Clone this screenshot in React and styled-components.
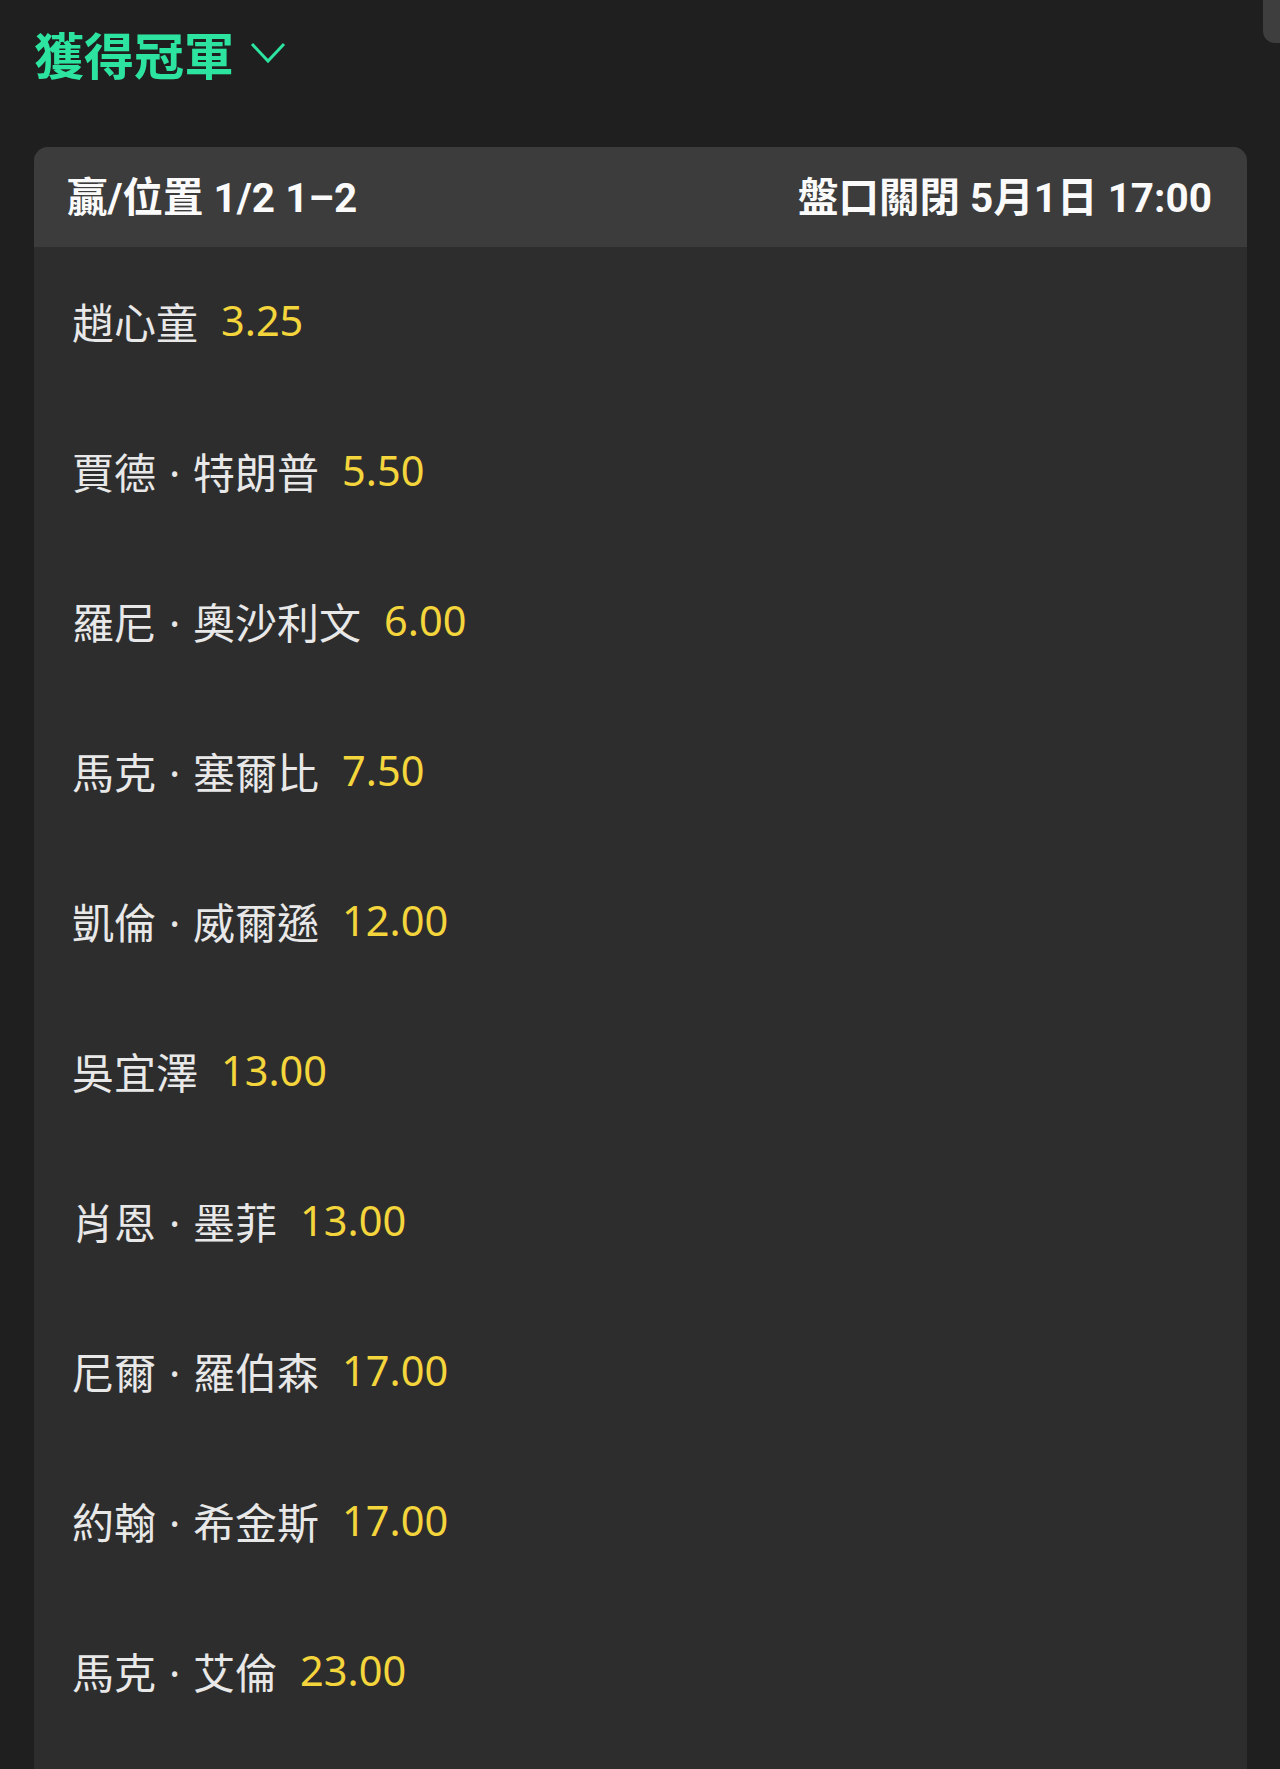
import React from 'react'
import styled, { createGlobalStyle } from 'styled-components'

const GlobalStyle = createGlobalStyle`
  html, body {
    margin: 0;
    padding: 0;
    background: #1f1f1f;
  }
  body {
    font-family: "Noto Sans", "Noto Sans CJK TC", sans-serif;
  }
`

const Page = styled.div`
  position: relative;
  padding: 20px 33px 0 34px;
  min-height: 1769px;
  box-sizing: border-box;
  overflow: hidden;
`

const ScrollThumb = styled.div`
  position: absolute;
  top: 0;
  right: 0;
  width: 17px;
  height: 43px;
  background: #3e3e3e;
  border-bottom-left-radius: 12px;
`

const TitleBar = styled.div`
  display: flex;
  align-items: center;
  gap: 16px;
  height: 66px;
  margin-bottom: 61px;
`

const Title = styled.h1`
  margin: 0;
  font-family: "Noto Sans CJK TC", sans-serif;
  font-size: 50px;
  font-weight: 700;
  color: #2de3a0;
  line-height: 1;
`

const Card = styled.section`
  background: #2d2d2d;
  border-radius: 14px 14px 0 0;
  overflow: hidden;
  padding-bottom: 80px;
`

const CardHeader = styled.header`
  display: flex;
  justify-content: space-between;
  align-items: center;
  height: 100px;
  padding: 0 35px 6px 33px;
  box-sizing: border-box;
  background: #3c3c3c;
  color: #fafafa;
  font-family: "Roboto", "Noto Sans CJK TC", sans-serif;
  font-size: 40.5px;
  font-weight: 700;
`

const Row = styled.div`
  display: flex;
  align-items: center;
  gap: 23px;
  height: 150px;
  padding: 0 0 4px 38px;
  box-sizing: border-box;
  font-family: "Noto Sans", "Noto Sans CJK TC", sans-serif;
  font-size: 42px;
`

const Name = styled.span`
  color: #e8e8e8;
  word-spacing: 2px;
`

const Odds = styled.span`
  color: #f4d53c;
  font-size: 41.5px;
`

const runners = [
  ['趙心童', '3.25'],
  ['賈德 · 特朗普', '5.50'],
  ['羅尼 · 奧沙利文', '6.00'],
  ['馬克 · 塞爾比', '7.50'],
  ['凱倫 · 威爾遜', '12.00'],
  ['吳宜澤', '13.00'],
  ['肖恩 · 墨菲', '13.00'],
  ['尼爾 · 羅伯森', '17.00'],
  ['約翰 · 希金斯', '17.00'],
  ['馬克 · 艾倫', '23.00'],
]

const Chevron = () => (
  <svg width="36" height="24" viewBox="0 0 36 24" fill="none">
    <path d="M2 3 L18 20 L34 3" stroke="#2de3a0" strokeWidth="3" />
  </svg>
)

export default function App() {
  return (
    <Page>
      <GlobalStyle />
      <ScrollThumb />
      <TitleBar>
        <Title>獲得冠軍</Title>
        <Chevron />
      </TitleBar>
      <Card>
        <CardHeader>
          <span>贏/位置 1/2 1–2</span>
          <span>盤口關閉 5月1日 17:00</span>
        </CardHeader>
        {runners.map(([name, odds], i) => (
          <Row key={i}>
            <Name>{name}</Name>
            <Odds>{odds}</Odds>
          </Row>
        ))}
      </Card>
    </Page>
  )
}
